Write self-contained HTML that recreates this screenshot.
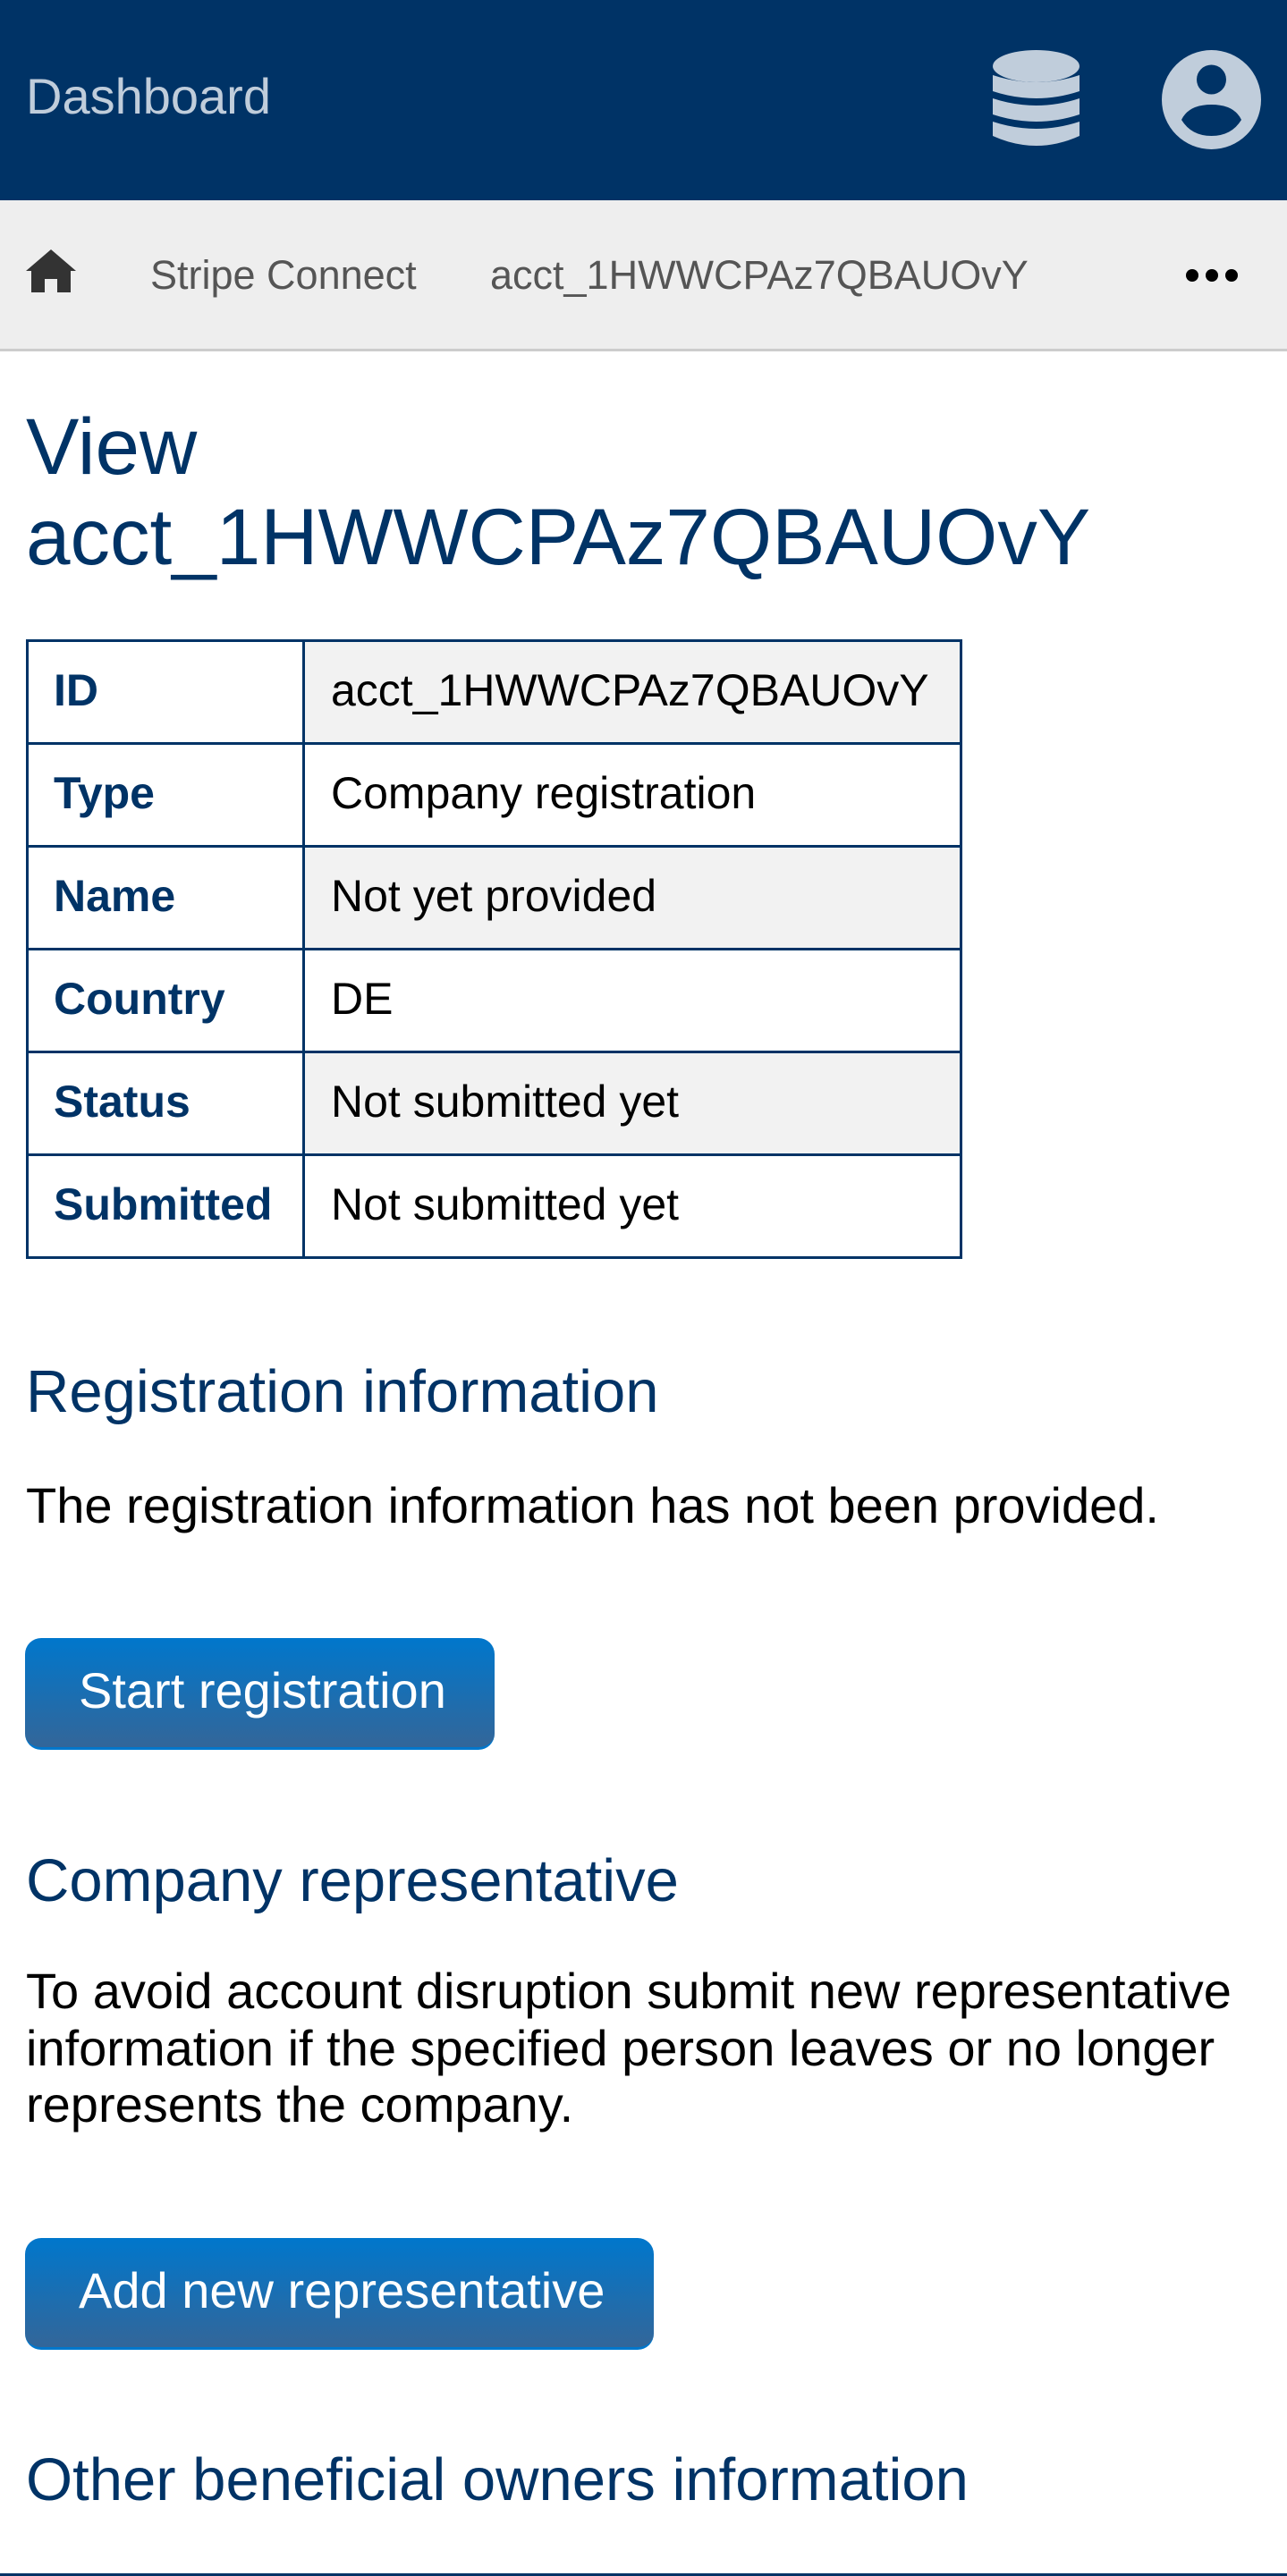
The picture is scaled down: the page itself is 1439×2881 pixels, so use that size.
<!DOCTYPE html>
<html><head><meta charset="utf-8"><style>
*{margin:0;padding:0;box-sizing:border-box}
html,body{width:1439px;height:2881px;overflow:hidden;background:#fff;font-family:"Liberation Sans",Arial,sans-serif}
.a{position:absolute;white-space:nowrap}
.hdr{position:absolute;left:0;top:0;width:1439px;height:224px;background:#003366}
.bc{position:absolute;left:0;top:224px;width:1439px;height:169px;background:#eeeeee;border-bottom:3px solid #cccccc}
h1,h2{font-weight:normal;color:#003366}
table{position:absolute;left:29px;top:715px;border-collapse:collapse;border:3px solid #003366}
td{border:3px solid #003366;height:115px;font-size:50px;padding:0 0 4px 28px;vertical-align:middle}
td.l{width:309px;font-weight:bold;color:#003366;background:#fff}
td.v{width:735px;color:#000;padding-left:29px}
tr.g td.v{background:#f2f2f2}
.btn{position:absolute;left:28px;height:125px;border-radius:18px;background:linear-gradient(#0077cc,#336699);border-bottom:3px solid #0077cc;color:#fff;font-size:56px;line-height:118px;padding-left:60px}
</style></head><body>
<div class="hdr"></div>
<div class="a" style="left:29px;top:80px;font-size:56px;line-height:56px;color:#c0cddb">Dashboard</div>
<svg class="a" style="left:1110px;top:56px" width="97" height="111" viewBox="0 0 97 111">
<g fill="#c0cddb">
<ellipse cx="48.5" cy="18" rx="48.5" ry="18"/>
<path d="M0 28 Q48.5 44 97 28 L97 46 Q48.5 62 0 46Z"/>
<path d="M0 54 Q48.5 70 97 54 L97 72 Q48.5 88 0 72Z"/>
<path d="M0 80 Q48.5 96 97 80 L97 96 Q48.5 118 0 96Z"/>
</g></svg>
<svg class="a" style="left:1299px;top:56px" width="111" height="111" viewBox="0 0 111 111">
<circle cx="55.5" cy="55.5" r="55.5" fill="#c0cddb"/>
<circle cx="55.5" cy="33" r="16.5" fill="#003366"/>
<path d="M22 78 Q30 61 55.5 61 Q81 61 89 78 Q78 96 55.5 96 Q33 96 22 78Z" fill="#003366"/>
</svg>
<div class="bc"></div>
<svg class="a" style="left:29px;top:279px" width="56" height="48" viewBox="0 0 56 48">
<path d="M28 0 L56 24 L50 24 L50 48 L35 48 L35 33 L21 33 L21 48 L6 48 L6 24 L0 24Z" fill="#333"/>
</svg>
<div class="a" style="left:168px;top:285px;font-size:45px;line-height:45px;color:#555">Stripe Connect</div>
<div class="a" style="left:548px;top:285px;font-size:45px;line-height:45px;color:#555">acct_1HWWCPAz7QBAUOvY</div>
<svg class="a" style="left:1326px;top:300px" width="58" height="16"><circle cx="7" cy="8" r="7"/><circle cx="29" cy="8" r="7"/><circle cx="51" cy="8" r="7"/></svg>
<h1 class="a" style="left:29px;top:449px;font-size:89px;line-height:101px">View<br>acct_1HWWCPAz7QBAUOvY</h1>
<table>
<tr class="g"><td class="l">ID</td><td class="v">acct_1HWWCPAz7QBAUOvY</td></tr>
<tr><td class="l">Type</td><td class="v">Company registration</td></tr>
<tr class="g"><td class="l">Name</td><td class="v">Not yet provided</td></tr>
<tr><td class="l">Country</td><td class="v">DE</td></tr>
<tr class="g"><td class="l">Status</td><td class="v">Not submitted yet</td></tr>
<tr><td class="l">Submitted</td><td class="v">Not submitted yet</td></tr>
</table>
<h2 class="a" style="left:29px;top:1523px;font-size:67px;line-height:67px">Registration information</h2>
<p class="a" style="left:29px;top:1652px;font-size:56px;line-height:63.5px">The registration information has not been provided.</p>
<div class="btn" style="top:1832px;width:525px">Start registration</div>
<h2 class="a" style="left:29px;top:2070px;font-size:67px;line-height:67px">Company representative</h2>
<p class="a" style="left:29px;top:2195px;font-size:56px;line-height:63.5px">To avoid account disruption submit new representative<br>information if the specified person leaves or no longer<br>represents the company.</p>
<div class="btn" style="top:2503px;width:703px">Add new representative</div>
<h2 class="a" style="left:29px;top:2740px;font-size:67px;line-height:67px">Other beneficial owners information</h2>
<div class="a" style="left:0;top:2878px;width:1439px;height:3px;background:#003366"></div>
</body></html>
